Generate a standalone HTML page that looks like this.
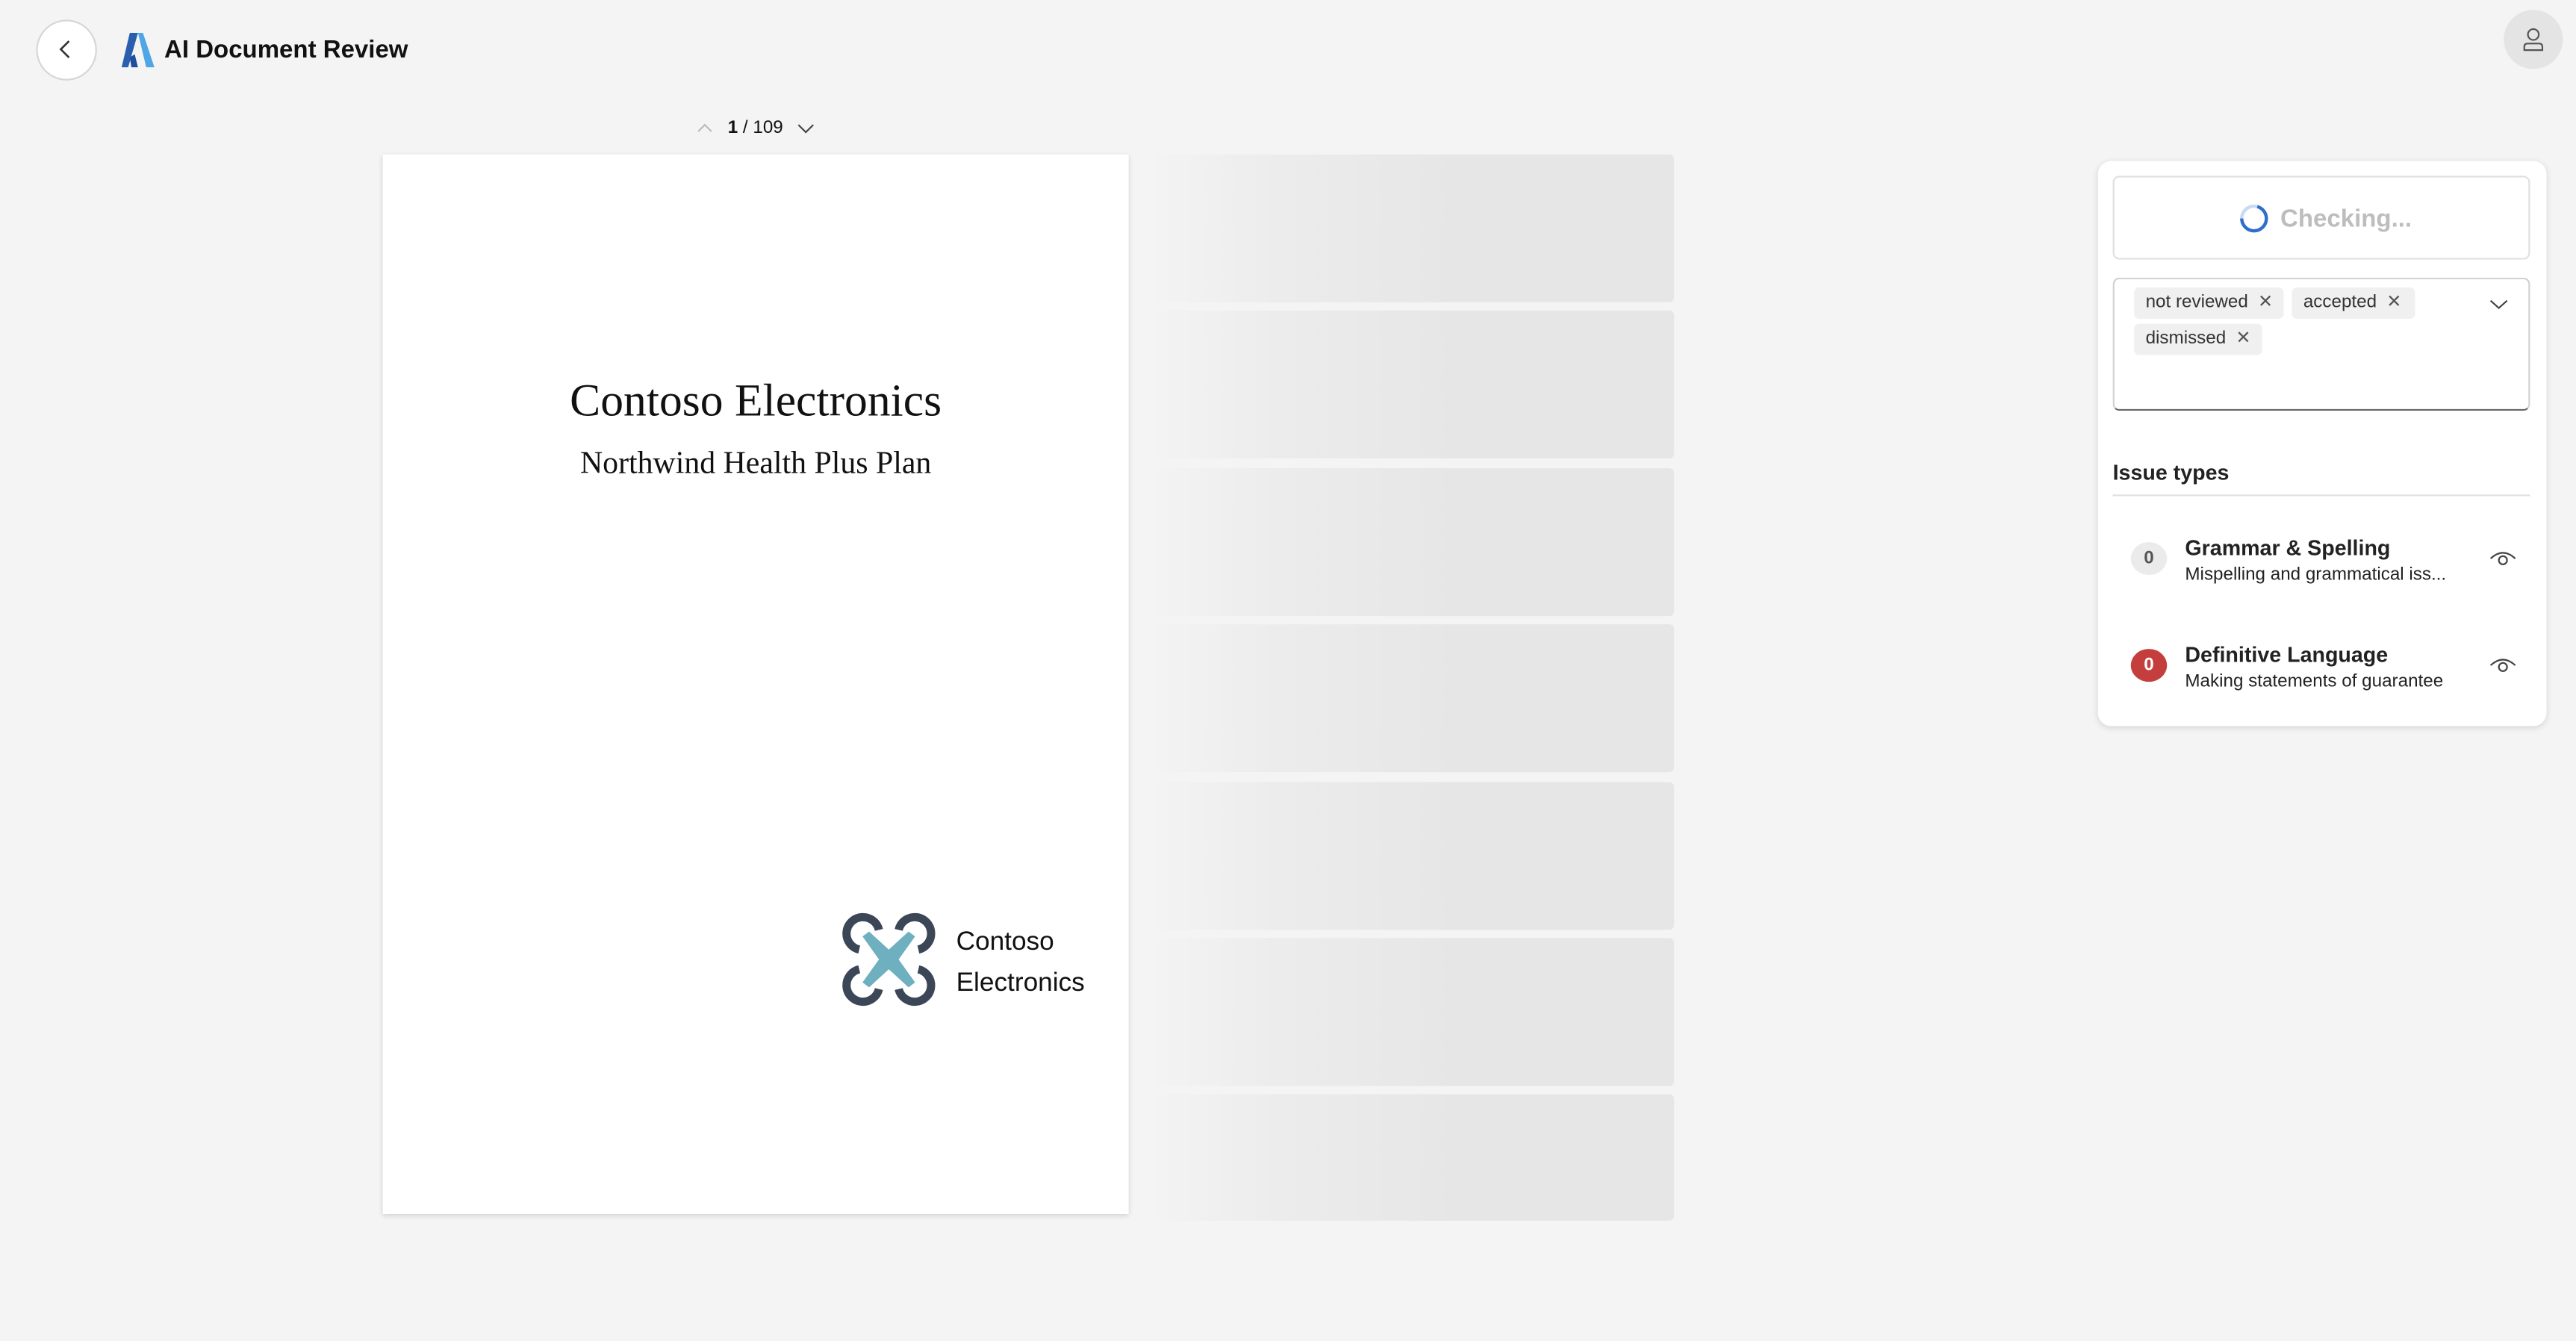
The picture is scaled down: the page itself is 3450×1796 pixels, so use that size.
<!DOCTYPE html>
<html><head><meta charset="utf-8"><style>
html,body{margin:0;padding:0;background:#f4f4f4;overflow:hidden;width:3450px;height:1796px}
#r{position:absolute;left:0;top:0;width:1568px;height:816px;transform:scale(2.2003);transform-origin:0 0;font-family:"Liberation Sans",sans-serif;color:#242424}
.a{position:absolute}
.sk{position:absolute;left:697px;width:322px;height:90px;background:linear-gradient(90deg,#f4f4f4 0%,#ececec 25%,#e6e6e6 60%,#e6e6e6 100%);border-radius:3px}
.chip{position:absolute;height:19px;background:#f0f0f0;border-radius:3px;font-size:11px;line-height:19px;padding-left:7px;color:#333}
.chip span{margin-left:6px;font-size:11px;color:#555}
</style></head><body><div id="r">
<div class="a" style="left:22px;top:12px;width:35px;height:35px;border-radius:50%;background:#fff;border:1px solid #d6d6d6"></div>
<svg class="a" style="left:34px;top:23px" width="12" height="14" viewBox="0 0 12 14"><path d="M8 2L3 7L8 12" fill="none" stroke="#333" stroke-width="1.2"/></svg>
<svg class="a" style="left:74px;top:20px" width="20" height="21" viewBox="0 0 20 21"><path d="M5 0H10L4 21H0Z" fill="#2a5fb0"/><path d="M10 0H13L20 21H15Z" fill="#4ea6e6"/><path d="M5 15L8 13L10 21H6Z" fill="#1f4f9e"/></svg>
<div class="a" style="left:100px;top:22px;font-size:15px;font-weight:bold;color:#111">AI Document Review</div>
<div class="a" style="left:1524px;top:6px;width:36px;height:36px;border-radius:50%;background:#e4e4e4"></div>
<svg class="a" style="left:1535px;top:16px" width="14" height="16" viewBox="0 0 14 16"><circle cx="7" cy="5" r="3.3" fill="none" stroke="#555" stroke-width="1"/><path d="M1.5 14.5V12.5Q1.5 10.5 3.5 10.5H10.5Q12.5 10.5 12.5 12.5V14.5Z" fill="none" stroke="#555" stroke-width="1"/></svg>
<svg class="a" style="left:424px;top:74px" width="10" height="8"><path d="M1 6L5 2L9 6" fill="none" stroke="#bbb" stroke-width="1"/></svg>
<div class="a" style="left:443px;top:72px;font-size:11px;color:#111"><b style="font-weight:bold">1</b> / 109</div>
<svg class="a" style="left:485px;top:74px" width="11" height="8"><path d="M1 2L5.5 6.5L10 2" fill="none" stroke="#444" stroke-width="1"/></svg>
<div class="a" style="left:233px;top:94px;width:454px;height:645px;background:#fff;box-shadow:0 1px 3px rgba(0,0,0,.15)"></div>
<div class="a" style="left:233px;width:454px;top:229px;text-align:center;font-family:'Liberation Serif',serif;font-size:28px;color:#111">Contoso Electronics</div>
<div class="a" style="left:233px;width:454px;top:272px;text-align:center;font-family:'Liberation Serif',serif;font-size:19px;color:#111">Northwind Health Plus Plan</div>
<svg class="a" style="left:511px;top:554px" width="60" height="60" viewBox="0 0 60 60">
<g fill="none" stroke="#3b4657" stroke-width="5"><path d="M12 24A10 10 0 1 1 24 12"/><path d="M36 12A10 10 0 1 1 48 24"/><path d="M12 36A10 10 0 1 0 24 48"/><path d="M36 48A10 10 0 1 0 48 36"/></g>
<path d="M14 16L18 13L30 24L42 13L46 16L36 30L46 44L42 47L30 36L18 47L14 44L24 30Z" fill="#6eb0bf"/></svg>
<div class="a" style="left:582px;top:561px;font-size:16px;line-height:25px;color:#111">Contoso<br>Electronics</div>
<div class="sk" style="top:94px"></div><div class="sk" style="top:189px"></div><div class="sk" style="top:285px"></div><div class="sk" style="top:380px"></div><div class="sk" style="top:476px"></div><div class="sk" style="top:571px"></div><div class="sk" style="top:666px;height:77px"></div>
<div class="a" style="left:1277px;top:98px;width:273px;height:344px;background:#fff;border-radius:8px;box-shadow:0 1px 4px rgba(0,0,0,.13)"></div>
<div class="a" style="left:1286px;top:107px;width:252px;height:49px;border:1px solid #e0e0e0;border-radius:4px"></div>
<svg class="a" style="left:1362px;top:123px" width="20" height="20"><circle cx="10" cy="10" r="7.5" fill="none" stroke="#c8daf2" stroke-width="2"/><path d="M2.5 10A7.5 7.5 0 0 0 17.5 10A7.5 7.5 0 0 0 12 2.8" fill="none" stroke="#2f6fcb" stroke-width="2"/></svg>
<div class="a" style="left:1388px;top:125px;font-size:15px;font-weight:bold;color:#bdbdbd">Checking...</div>
<div class="a" style="left:1286px;top:169px;width:252px;height:79px;border:1px solid #d1d1d1;border-bottom:1px solid #666;border-radius:4px"></div>
<div class="chip" style="left:1299px;top:175px;width:84px">not reviewed<span>✕</span></div>
<div class="chip" style="left:1395px;top:175px;width:68px">accepted<span>✕</span></div>
<div class="chip" style="left:1299px;top:197px;width:71px">dismissed<span>✕</span></div>
<svg class="a" style="left:1515px;top:181px" width="12" height="8"><path d="M1 2L6 6.5L11 2" fill="none" stroke="#444" stroke-width="1"/></svg>
<div class="a" style="left:1286px;top:280px;font-size:13px;font-weight:bold;color:#222">Issue types</div>
<div class="a" style="left:1286px;top:301px;width:254px;height:1px;background:#e0e0e0"></div>
<div class="a" style="left:1297px;top:330px;width:22px;height:20px;border-radius:50%;background:#ebebeb;text-align:center;font-size:11px;line-height:20px;font-weight:bold;color:#555">0</div>
<div class="a" style="left:1330px;top:326px;font-size:13px;font-weight:bold;color:#222">Grammar &amp; Spelling</div>
<div class="a" style="left:1330px;top:344px;font-size:11px;color:#222">Mispelling and grammatical iss...</div>
<div class="a" style="left:1297px;top:395px;width:22px;height:20px;border-radius:50%;background:#c43e3e;text-align:center;font-size:11px;line-height:20px;font-weight:bold;color:#fff">0</div>
<div class="a" style="left:1330px;top:391px;font-size:13px;font-weight:bold;color:#222">Definitive Language</div>
<div class="a" style="left:1330px;top:409px;font-size:11px;color:#222">Making statements of guarantee</div>
<svg class="a" style="left:1515px;top:334px" width="17" height="12"><path d="M1 6Q8.5 -1 16 6" fill="none" stroke="#444" stroke-width="1"/><circle cx="8.5" cy="7" r="2.5" fill="none" stroke="#444" stroke-width="1"/></svg>
<svg class="a" style="left:1515px;top:399px" width="17" height="12"><path d="M1 6Q8.5 -1 16 6" fill="none" stroke="#444" stroke-width="1"/><circle cx="8.5" cy="7" r="2.5" fill="none" stroke="#444" stroke-width="1"/></svg>
</div></body></html>
